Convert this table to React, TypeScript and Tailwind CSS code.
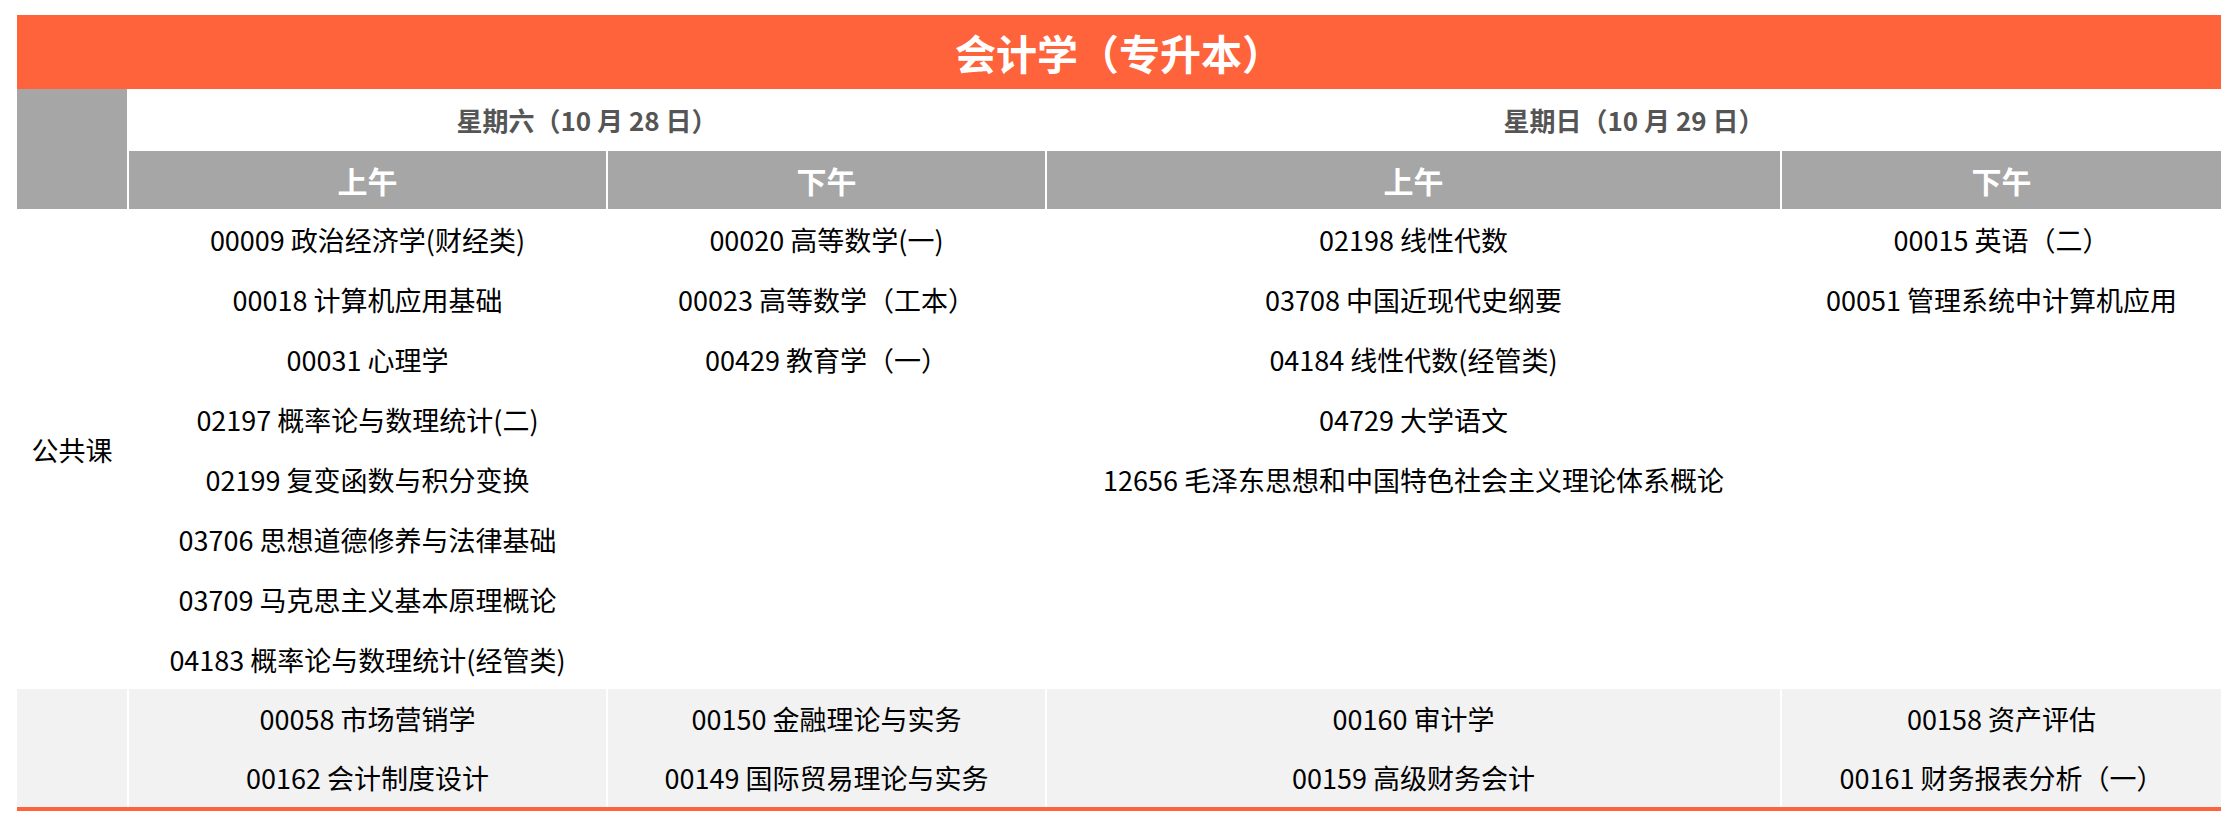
import React from 'react';

// Exam schedule: 会计学（专升本）
const COLS = 'grid grid-cols-[110px_477px_437px_733px_439px] gap-x-[2px]';

const publicCourses: string[][] = [
  [
    '00009 政治经济学(财经类)',
    '00018 计算机应用基础',
    '00031 心理学',
    '02197 概率论与数理统计(二)',
    '02199 复变函数与积分变换',
    '03706 思想道德修养与法律基础',
    '03709 马克思主义基本原理概论',
    '04183 概率论与数理统计(经管类)',
  ],
  ['00020 高等数学(一)', '00023 高等数学（工本）', '00429 教育学（一）'],
  [
    '02198 线性代数',
    '03708 中国近现代史纲要',
    '04184 线性代数(经管类)',
    '04729 大学语文',
    '12656 毛泽东思想和中国特色社会主义理论体系概论',
  ],
  ['00015 英语（二）', '00051 管理系统中计算机应用'],
];

const majorCourses: string[][] = [
  ['00058 市场营销学', '00162 会计制度设计'],
  ['00150 金融理论与实务', '00149 国际贸易理论与实务'],
  ['00160 审计学', '00159 高级财务会计'],
  ['00158 资产评估', '00161 财务报表分析（一）'],
];

const Item = ({ text, h }: { text: string; h: string }) => (
  <div className={`flex items-center justify-center whitespace-nowrap ${h}`}>{text}</div>
);

export default function App() {
  return (
    <div
      className="w-[2236px] h-[826px] bg-white pt-[15px] px-[17px] text-black"
      style={{ fontFamily: '"Noto Sans CJK SC", "Noto Sans", sans-serif' }}
    >
      <div className="w-[2204px]">
        {/* title */}
        <div className="h-[74px] bg-[#ff633b] flex items-center justify-center text-white font-bold text-[41px] leading-none">
          会计学（专升本）
        </div>

        {/* day + half-day headers */}
        <div className={`${COLS} grid-rows-[62px_58px]`}>
          <div className="row-span-2 bg-[#a6a6a6]" />
          <div className="col-span-2 flex items-center justify-center font-bold text-[26px] text-[#555555] leading-none">
            星期六（10 月 28 日）
          </div>
          <div className="col-span-2 flex items-center justify-center font-bold text-[26px] text-[#555555] leading-none">
            星期日（10 月 29 日）
          </div>
          {['上午', '下午', '上午', '下午'].map((t, i) => (
            <div
              key={i}
              className="bg-[#a6a6a6] flex items-center justify-center font-bold text-[30px] text-white leading-none"
            >
              {t}
            </div>
          ))}
        </div>

        {/* 公共课 */}
        <div className={`${COLS} text-[27px] leading-none`}>
          <div className="h-[480px] flex items-center justify-center">公共课</div>
          {publicCourses.map((list, i) => (
            <div key={i} className="flex flex-col">
              {list.map((t) => (
                <Item key={t} text={t} h="h-[60px]" />
              ))}
            </div>
          ))}
        </div>

        {/* 专业课 */}
        <div className={`${COLS} text-[27px] leading-none`}>
          <div className="bg-[#f2f2f2] h-[118px]" />
          {majorCourses.map((list, i) => (
            <div key={i} className="bg-[#f2f2f2] flex flex-col">
              {list.map((t) => (
                <Item key={t} text={t} h="h-[59px]" />
              ))}
            </div>
          ))}
        </div>

        <div className="h-[4px] bg-[#ff633b]" />
      </div>
    </div>
  );
}
